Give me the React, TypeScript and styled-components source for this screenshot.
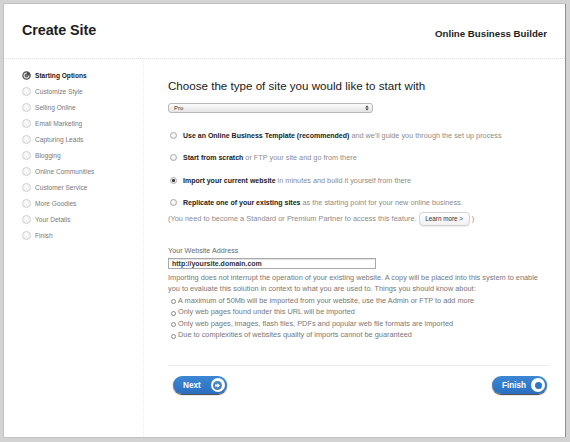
import React from "react";
import styled, { createGlobalStyle } from "styled-components";

const GlobalStyle = createGlobalStyle`
  html, body { margin: 0; padding: 0; }
  body { background: #d3d3d3; font-family: "Liberation Sans", Arial, Helvetica, sans-serif; }
  * { box-sizing: border-box; }
`;

const Page = styled.div`
  width: 570px;
  height: 442px;
  padding: 3px 4px 4px 3px;
  background: #d3d3d3;
`;

const Panel = styled.div`
  width: 100%;
  height: 100%;
  background: #fff;
  border: 1px solid #c2c2c2;
  border-right-color: #8e8e8e;
  border-radius: 2px;
  display: flex;
  flex-direction: column;
`;

const Header = styled.div`
  height: 55px;
  flex: none;
  display: flex;
  align-items: center;
  justify-content: space-between;
  padding: 0 18px 0 18px;
  border-bottom: 1px dotted #dedede;
`;

const Title = styled.h1`
  margin: -2px 0 0 0;
  font-size: 14.4px;
  font-weight: 700;
  color: #1e1e1e;
  letter-spacing: -0.1px;
`;

const Brand = styled.div`
  margin-top: 4px;
  font-size: 9.7px;
  font-weight: 700;
  color: #1e1e1e;
`;

const Body = styled.div`
  flex: 1;
  display: flex;
  min-height: 0;
`;

const Sidebar = styled.ul`
  width: 140px;
  flex: none;
  margin: 0;
  padding: 8px 0 0 18px;
  list-style: none;
  border-right: 1px dotted #ebebeb;
`;

const Step = styled.li<{ $active?: boolean }>`
  height: 16.1px;
  display: flex;
  align-items: center;
  gap: 4px;
  font-size: 6.6px;
  font-weight: ${(p) => (p.$active ? 700 : 400)};
  color: ${(p) => (p.$active ? "#222" : "#7a7a7a")};
`;

const StepDot = styled.span`
  width: 9px;
  height: 9px;
  border-radius: 50%;
  border: 1px solid #d2d2d2;
  background: radial-gradient(circle at 50% 40%, #ffffff 0%, #f1f1f1 60%, #e2e2e2 100%);
  flex: none;
`;

const ActiveDot = () => (
  <svg width="9" height="9" viewBox="0 0 18 18" style={{ flex: "none" }}>
    <circle cx="9" cy="9" r="8.5" fill="#4a4a4a" />
    <circle cx="9" cy="9" r="5" fill="none" stroke="#e8e8e8" strokeWidth="2.4" strokeDasharray="24 8" />
    <circle cx="9" cy="9" r="2" fill="#9a9a9a" />
  </svg>
);

const Main = styled.div`
  flex: 1;
  display: flex;
  flex-direction: column;
  padding: 0 16px 0 24px;
`;

const Heading = styled.h2`
  margin: 20px 0 0 0;
  font-size: 11.6px;
  line-height: 14px;
  font-weight: 400;
  color: #1a1a1a;
`;

const SelectBox = styled.div`
  margin-top: 10px;
  width: 205px;
  height: 10px;
  border: 1px solid #b9b9b9;
  border-radius: 3px;
  background: linear-gradient(#fbfbfb, #e4e4e4);
  display: flex;
  align-items: center;
  justify-content: space-between;
  padding: 0 3px 0 5px;
  font-size: 6px;
  color: #333;
`;

const Arrows = () => (
  <svg width="4" height="6" viewBox="0 0 4 6">
    <path d="M0.3 2.4 L2 0.5 L3.7 2.4 Z M0.3 3.6 L2 5.5 L3.7 3.6 Z" fill="#333" />
  </svg>
);

const Options = styled.div`
  margin-top: 16.7px;
  display: flex;
  flex-direction: column;
  gap: 10.3px;
`;

const Option = styled.div`
  height: 12px;
  display: flex;
  align-items: center;
  gap: 6px;
  padding-left: 2px;
  font-size: 7.3px;
  color: #8c8c8c;
  white-space: nowrap;
`;

const Radio = styled.span<{ $checked?: boolean }>`
  width: 7px;
  height: 7px;
  border-radius: 50%;
  border: 1px solid #a9a9a9;
  background: radial-gradient(circle at 50% 40%, #fff, #e6e6e6);
  flex: none;
  display: flex;
  align-items: center;
  justify-content: center;
  &::after {
    content: "";
    width: 2.5px;
    height: 2.5px;
    border-radius: 50%;
    background: #333;
    display: ${(p) => (p.$checked ? "block" : "none")};
  }
`;

const Strong = styled.b`
  color: #222;
  font-weight: 700;
  font-size: 7px;
`;

const Note = styled.div`
  margin-top: 2.8px;
  height: 15px;
  display: flex;
  align-items: center;
  font-size: 7.4px;
  color: #8c8c8c;
  white-space: nowrap;
`;

const LearnMore = styled.span`
  margin-left: 2px;
  width: 51px;
  height: 14px;
  border: 1px solid #d4d4d4;
  border-radius: 4px;
  background: linear-gradient(#ffffff, #f1f1f1);
  box-shadow: 0 1px 1px rgba(0, 0, 0, 0.08);
  display: flex;
  align-items: center;
  justify-content: center;
  font-size: 6.3px;
  color: #333;
`;

const Closing = styled.span`
  margin-left: 2px;
`;

const Label = styled.div`
  margin-top: 20px;
  font-size: 7.2px;
  line-height: 10px;
  color: #6a6a6a;
`;

const AddressInput = styled.div`
  margin-top: 1.3px;
  width: 208px;
  height: 11px;
  border: 1px solid #a9a9a9;
  box-shadow: inset 0 1px 1px rgba(0, 0, 0, 0.12);
  display: flex;
  align-items: center;
  padding-left: 3px;
  font-size: 7px;
  font-weight: 700;
  color: #333;
`;

const Info = styled.div`
  margin-top: 3px;
  font-size: 7.35px;
  line-height: 11.5px;
  color: #777;
`;

const InfoList = styled.ul`
  margin: 0;
  padding: 0;
  list-style: none;
`;

const InfoItem = styled.li`
  position: relative;
  padding-left: 10px;
  &::before {
    content: "";
    position: absolute;
    left: 3px;
    top: 4.5px;
    width: 3px;
    height: 3px;
    border-radius: 50%;
    border: 0.8px solid #888;
  }
`;

const Footer = styled.div`
  margin-top: 24.7px;
  border-top: 1px solid #ececec;
  padding: 10px 2px 0 5px;
  display: flex;
  justify-content: space-between;
`;

const PillButton = styled.button<{ $gap: number }>`
  height: 18px;
  border: none;
  border-radius: 9px;
  background: linear-gradient(#3c87d3, #2b6fbf);
  box-shadow: 0 1px 1px rgba(0, 0, 0, 0.75);
  display: flex;
  align-items: center;
  gap: ${(p) => p.$gap}px;
  padding: 0 2px 0 10px;
  font-family: "Liberation Sans", Arial, sans-serif;
  font-size: 8.2px;
  font-weight: 700;
  color: #fff;
  cursor: pointer;
`;

const Knob = styled.span`
  width: 14px;
  height: 14px;
  border-radius: 50%;
  background: #fff;
  display: flex;
  align-items: center;
  justify-content: center;
  flex: none;
`;

const NextIcon = () => (
  <svg width="9" height="9" viewBox="0 0 18 18">
    <circle cx="9" cy="9" r="9" fill="#4d82bd" />
    <path d="M4 7.2 H9 V4.5 L14 9 L9 13.5 V10.8 H4 Z" fill="#fff" />
  </svg>
);

const FinishIcon = () => (
  <svg width="7" height="7" viewBox="0 0 14 14">
    <circle cx="7" cy="7" r="7" fill="#2f74c2" />
  </svg>
);

const steps = [
  "Starting Options",
  "Customize Style",
  "Selling Online",
  "Email Marketing",
  "Capturing Leads",
  "Blogging",
  "Online Communities",
  "Customer Service",
  "More Goodies",
  "Your Details",
  "Finish",
];

export default function App() {
  return (
    <>
      <GlobalStyle />
      <Page>
        <Panel>
          <Header>
            <Title>Create Site</Title>
            <Brand>Online Business Builder</Brand>
          </Header>
          <Body>
            <Sidebar>
              {steps.map((s, i) => (
                <Step key={s} $active={i === 0}>
                  {i === 0 ? <ActiveDot /> : <StepDot />}
                  {s}
                </Step>
              ))}
            </Sidebar>
            <Main>
              <Heading>Choose the type of site you would like to start with</Heading>
              <SelectBox>
                <span>Pro</span>
                <Arrows />
              </SelectBox>
              <Options>
                <Option>
                  <Radio />
                  <span>
                    <Strong>Use an Online Business Template (recommended)</Strong> and we'll guide you through the set up process
                  </span>
                </Option>
                <Option>
                  <Radio />
                  <span>
                    <Strong>Start from scratch</Strong> or FTP your site and go from there
                  </span>
                </Option>
                <Option>
                  <Radio $checked />
                  <span>
                    <Strong>Import your current website</Strong> in minutes and build it yourself from there
                  </span>
                </Option>
                <Option>
                  <Radio />
                  <span>
                    <Strong>Replicate one of your existing sites</Strong> as the starting point for your new online business.
                  </span>
                </Option>
              </Options>
              <Note>
                (You need to become a Standard or Premium Partner to access this feature.
                <LearnMore>Learn more &gt;</LearnMore>
                <Closing>)</Closing>
              </Note>
              <Label>Your Website Address</Label>
              <AddressInput>http://yoursite.domain.com</AddressInput>
              <Info>
                Importing does not interrupt the operation of your existing website. A copy will be placed into this system to enable
                you to evaluate this solution in context to what you are used to. Things you should know about:
                <InfoList>
                  <InfoItem>A maximum of 50Mb will be imported from your website, use the Admin or FTP to add more</InfoItem>
                  <InfoItem>Only web pages found under this URL will be imported</InfoItem>
                  <InfoItem>Only web pages, images, flash files, PDFs and popular web file formats are imported</InfoItem>
                  <InfoItem>Due to complexities of websites quality of imports cannot be guaranteed</InfoItem>
                </InfoList>
              </Info>
              <Footer>
                <PillButton $gap={10}>
                  Next
                  <Knob>
                    <NextIcon />
                  </Knob>
                </PillButton>
                <PillButton $gap={5}>
                  Finish
                  <Knob>
                    <FinishIcon />
                  </Knob>
                </PillButton>
              </Footer>
            </Main>
          </Body>
        </Panel>
      </Page>
    </>
  );
}
